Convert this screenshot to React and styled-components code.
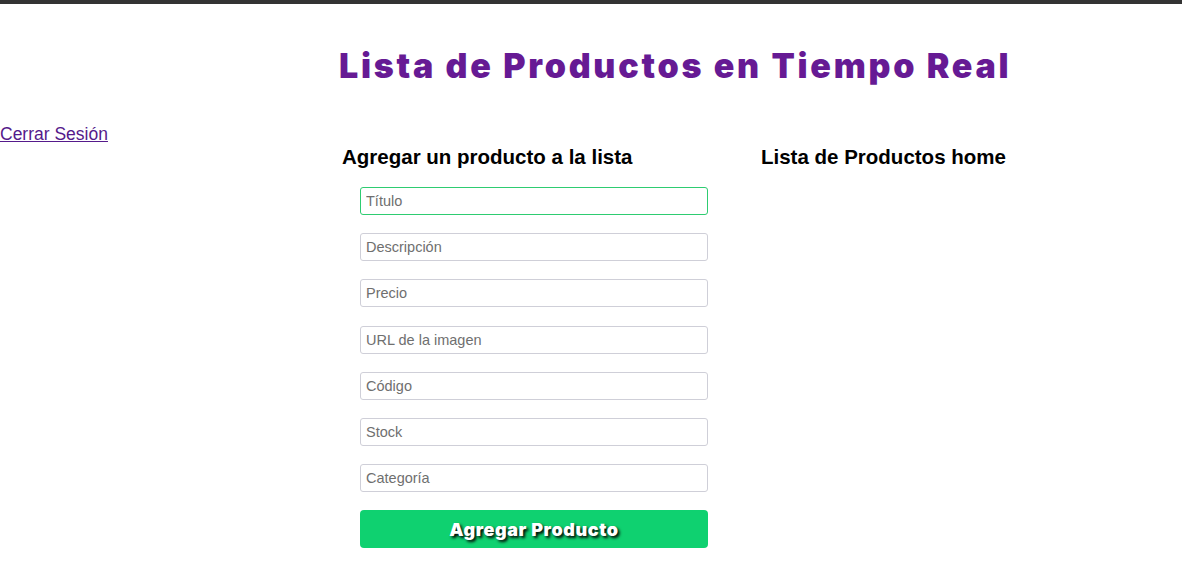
import React from "react";
import styled, { createGlobalStyle } from "styled-components";

const GlobalStyle = createGlobalStyle`
  html, body {
    margin: 0;
    padding: 0;
    background: #ffffff;
    font-family: "Liberation Sans", Arial, sans-serif;
  }
`;

const Page = styled.div`
  border-top: 4px solid #333333;
  min-height: 562px;
`;

const Title = styled.h1`
  margin: 0;
  padding: 42px 0 0 339px;
  font-family: "Inter", "Liberation Sans", Arial, sans-serif;
  font-size: 34px;
  line-height: 40px;
  font-weight: 900;
  letter-spacing: 2.75px;
  color: #661a94;
  white-space: nowrap;
`;

const Row = styled.div`
  display: grid;
  grid-template-columns: 342px auto;
  align-items: start;
  margin-top: 38px;
`;

const Logout = styled.a`
  justify-self: start;
  font-size: 17.5px;
  line-height: 20px;
  color: #551a8b;
  text-decoration: underline;
  white-space: nowrap;
`;

const Columns = styled.div`
  display: flex;
  align-items: flex-start;
  gap: 53px;
  padding-top: 21px;
`;

const Column = styled.section`
  width: ${(p) => p.$width}px;
`;

const Subtitle = styled.h3`
  margin: 0 0 18px 0;
  font-size: 20.5px;
  line-height: 24px;
  font-weight: 700;
  color: #000000;
  white-space: nowrap;
`;

const Form = styled.form`
  display: flex;
  flex-direction: column;
  gap: 18.2px;
  padding-left: 18px;
  width: 348px;
`;

const Input = styled.input`
  box-sizing: border-box;
  width: 348px;
  height: 28px;
  padding: 0 5px;
  border: 1px solid ${(p) => (p.$focused ? "#2ecc71" : "#cfcfd8")};
  border-radius: 3px;
  font-family: "Liberation Sans", Arial, sans-serif;
  font-size: 14.5px;
  color: #222;
  outline: none;
  background: #fff;
  &::placeholder {
    color: #6f6f6f;
  }
`;

const Button = styled.button`
  box-sizing: border-box;
  width: 348px;
  height: 38px;
  border: none;
  border-radius: 4px;
  background: #0fd170;
  color: #ffffff;
  font-family: "Inter", "Liberation Sans", Arial, sans-serif;
  font-size: 18px;
  font-weight: 900;
  letter-spacing: 0.6px;
  text-shadow: 2px 2px 3px #000000;
  cursor: pointer;
`;

const fields = [
  "Título",
  "Descripción",
  "Precio",
  "URL de la imagen",
  "Código",
  "Stock",
  "Categoría",
];

export default function App() {
  return (
    <Page>
      <GlobalStyle />
      <Title>Lista de Productos en Tiempo Real</Title>
      <Row>
        <Logout href="#">Cerrar Sesión</Logout>
        <Columns>
          <Column $width={366}>
            <Subtitle>Agregar un producto a la lista</Subtitle>
            <Form onSubmit={(e) => e.preventDefault()}>
              {fields.map((f, i) => (
                <Input key={f} placeholder={f} $focused={i === 0} />
              ))}
              <Button type="submit">Agregar Producto</Button>
            </Form>
          </Column>
          <Column $width={260}>
            <Subtitle>Lista de Productos home</Subtitle>
          </Column>
        </Columns>
      </Row>
    </Page>
  );
}
